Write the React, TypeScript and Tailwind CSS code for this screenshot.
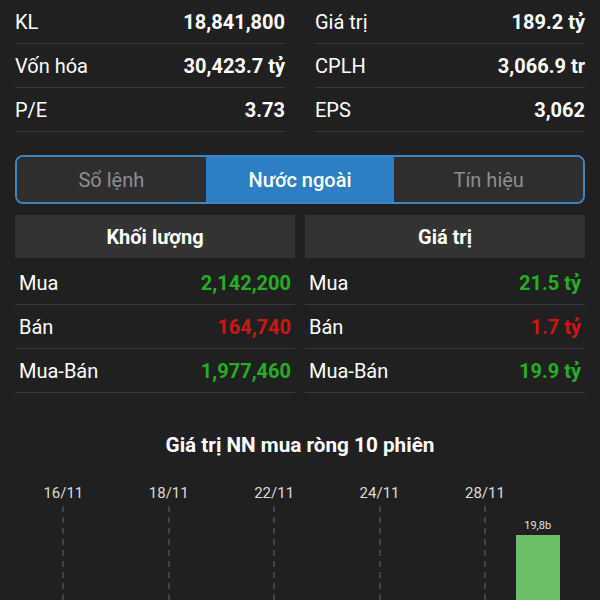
const stats = [
  [
    { label: 'KL', value: '18,841,800' },
    { label: 'Vốn hóa', value: '30,423.7 tỷ' },
    { label: 'P/E', value: '3.73' },
  ],
  [
    { label: 'Giá trị', value: '189.2 tỷ' },
    { label: 'CPLH', value: '3,066.9 tr' },
    { label: 'EPS', value: '3,062' },
  ],
]

const foreign = [
  {
    title: 'Khối lượng',
    rows: [
      { label: 'Mua', value: '2,142,200', up: true },
      { label: 'Bán', value: '164,740', up: false },
      { label: 'Mua-Bán', value: '1,977,460', up: true },
    ],
  },
  {
    title: 'Giá trị',
    rows: [
      { label: 'Mua', value: '21.5 tỷ', up: true },
      { label: 'Bán', value: '1.7 tỷ', up: false },
      { label: 'Mua-Bán', value: '19.9 tỷ', up: true },
    ],
  },
]

const slots = ['16/11', '', '18/11', '', '22/11', '', '24/11', '', '28/11', '']

function DashLine() {
  return (
    <svg width="2" height="100" className="block">
      <line x1="1" y1="0" x2="1" y2="100" stroke="#666666" strokeWidth="1" strokeDasharray="6 5" />
    </svg>
  )
}

export default function App() {
  return (
    <div className="w-[600px] h-[600px] overflow-hidden bg-[#202020] text-white font-['Roboto','Liberation_Sans',sans-serif]">
      {/* stats */}
      <div className="grid grid-cols-2 gap-x-[30px] px-[15px]">
        {stats.map((col, i) => (
          <div key={i}>
            {col.map((s) => (
              <div key={s.label} className="flex h-[44px] items-center justify-between border-b border-[#383838] text-[20px]">
                <span>{s.label}</span>
                <span className="font-bold">{s.value}</span>
              </div>
            ))}
          </div>
        ))}
      </div>

      {/* tabs */}
      <div className="mx-[15px] mt-[23px] flex h-[49px] overflow-hidden rounded-[8px] border-2 border-[#3d86c2] text-[20px]">
        <div className="flex flex-1 items-center justify-center bg-[#2e2e2e] text-[#8e8e8e]">Sổ lệnh</div>
        <div className="flex flex-1 items-center justify-center bg-[#2b7fc2] font-medium text-white">Nước ngoài</div>
        <div className="flex flex-1 items-center justify-center bg-[#2e2e2e] text-[#8e8e8e]">Tín hiệu</div>
      </div>

      {/* foreign trading */}
      <div className="mt-[11px] grid grid-cols-2 gap-x-[10px] px-[15px]">
        {foreign.map((t) => (
          <div key={t.title}>
            <div className="flex h-[43px] items-center justify-center bg-[#333333] text-[20px] font-bold">{t.title}</div>
            <div className="mt-[3px]">
              {t.rows.map((r) => (
                <div key={r.label} className="flex h-[44px] items-center justify-between border-b border-[#383838] px-[4px] text-[20px]">
                  <span>{r.label}</span>
                  <span className={r.up ? 'font-bold text-[#22b022]' : 'font-bold text-[#cf1515]'}>{r.value}</span>
                </div>
              ))}
            </div>
          </div>
        ))}
      </div>

      {/* chart */}
      <div className="mt-[40px] text-center text-[20.7px] font-bold leading-[25px]">Giá trị NN mua ròng 10 phiên</div>
      <div className="ml-[37px] mt-[25px] grid w-[527px] grid-cols-10">
        {slots.map((d, i) => (
          <div key={i} className="flex flex-col items-center">
            {i === 9 ? (
              <>
                <div className="mt-[36px] text-[11px] leading-[14px] text-[#e0e0e0]">19,8b</div>
                <div className="mt-[2px] h-[70px] w-[44px] bg-[#6cbf66]" />
              </>
            ) : d ? (
              <>
                <div className="text-[15px] leading-[20px] text-[#dcdcdc]">{d}</div>
                <div className="mt-[3px]">
                  <DashLine />
                </div>
              </>
            ) : null}
          </div>
        ))}
      </div>
    </div>
  )
}
